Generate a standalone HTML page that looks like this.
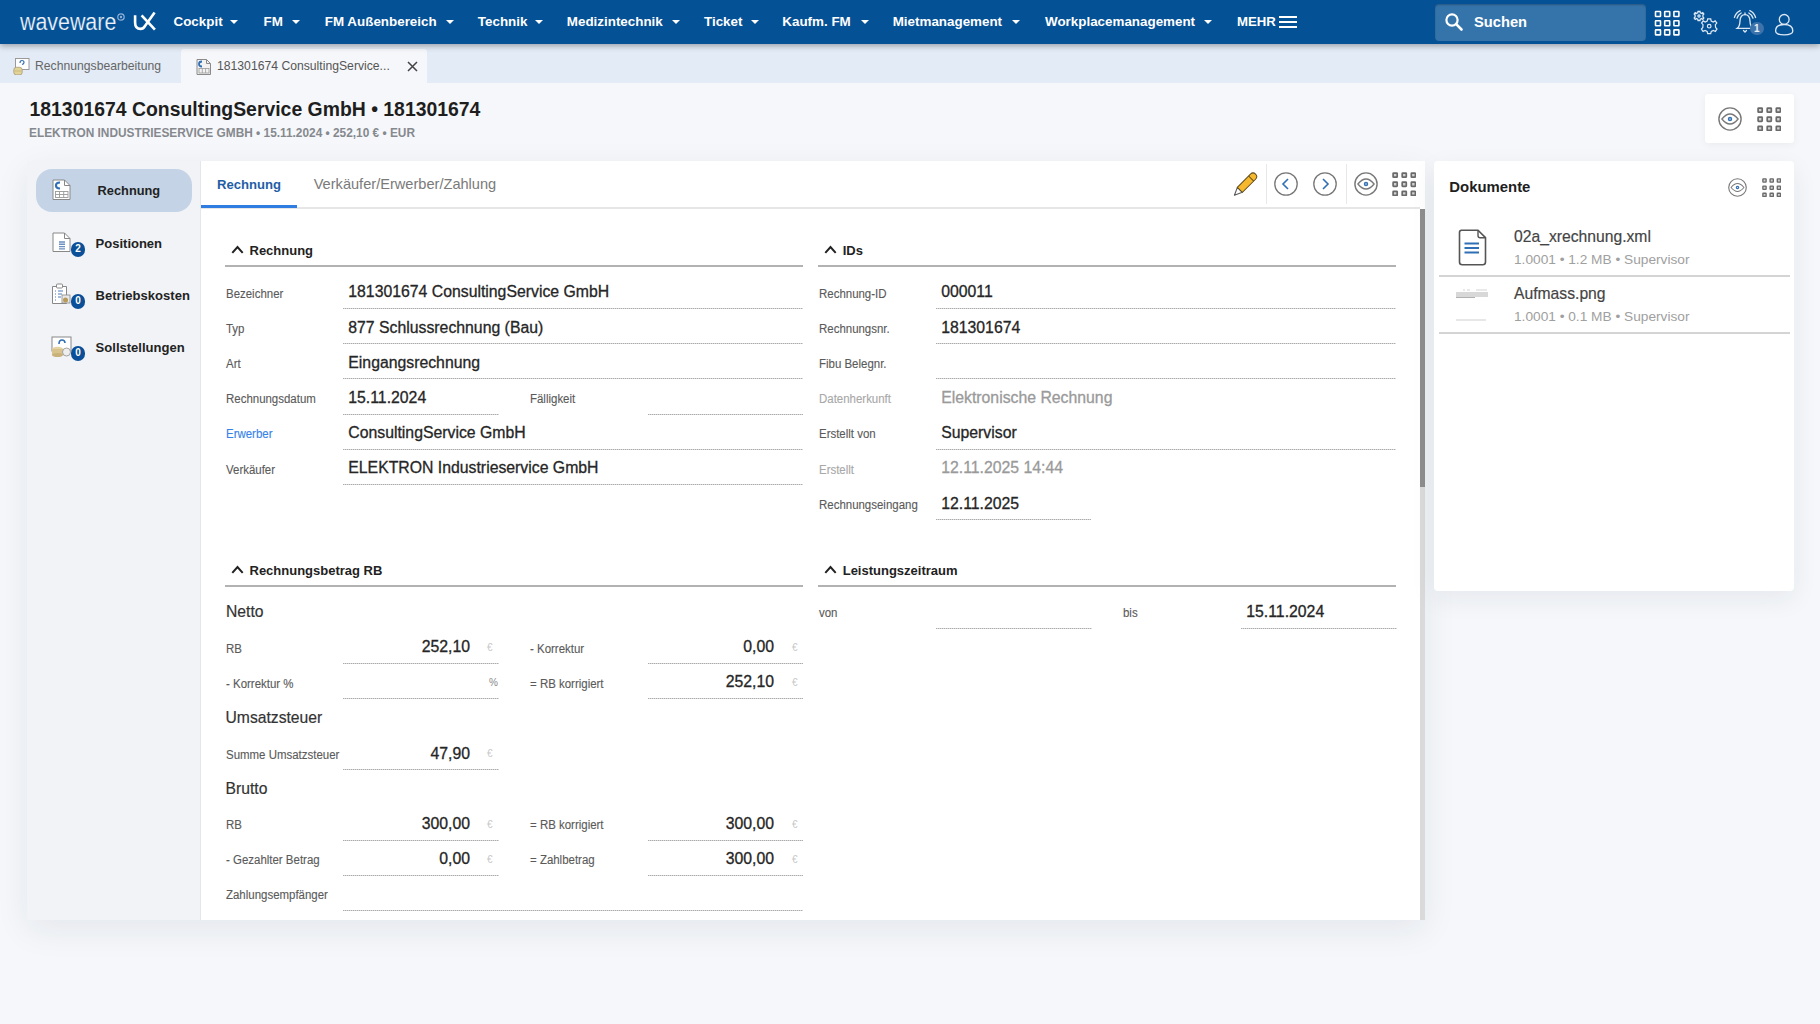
<!DOCTYPE html>
<html><head><meta charset="utf-8">
<style>
*{box-sizing:border-box;margin:0;padding:0}
html,body{width:1820px;height:1024px;overflow:hidden}
body{background:#f5f7fa;font-family:"Liberation Sans",sans-serif;position:relative}
.t{position:absolute;white-space:nowrap;line-height:1}
.v{-webkit-text-stroke:0.3px currentColor}
.l{-webkit-text-stroke:0.12px currentColor}
.m{-webkit-text-stroke:0.18px currentColor}
.r{position:absolute}
</style></head><body>
<div class="r" style="left:0px;top:0px;width:1820px;height:44px;background:#045196;box-shadow:0 2px 6px rgba(0,0,0,.32);z-index:2"></div>
<div class="r" style="left:0;top:0;width:1820px;height:43px;z-index:3">
<div class="t" style="left:19.5px;top:10.5px;font-size:23.5px;color:#eef3f9;transform:scaleX(.91);transform-origin:0 0;line-height:23.5px;-webkit-text-stroke:0.2px #045196">waveware</div>
<svg class="r" style="left:116px;top:12px" width="10" height="10" viewBox="0 0 10 10"><circle cx="5" cy="5" r="3.2" fill="none" stroke="#8fb0d6" stroke-width="1.2"/><circle cx="5" cy="5" r="1.2" fill="#8fb0d6"/></svg>
<svg class="r" style="left:130px;top:10px" width="28" height="22" viewBox="0 0 28 22"><path d="M5.1 5.3 V12.5 Q5.1 18.9 10.5 18.9 Q13.4 18.9 15 16 L24.6 2.6" fill="none" stroke="#fff" stroke-width="2.6"/><path d="M11.6 5.3 L24.9 19.6" fill="none" stroke="#fff" stroke-width="2.6"/></svg>
<div class="t " style="left:173.5px;top:15.06px;font-size:13.4px;color:#fff;font-weight:bold;">Cockpit</div>
<div class="r" style="left:230px;top:19.5px;width:0;height:0;border-left:4.6px solid transparent;border-right:4.6px solid transparent;border-top:4.8px solid #fff"></div>
<div class="t " style="left:263.5px;top:15.06px;font-size:13.4px;color:#fff;font-weight:bold;">FM</div>
<div class="r" style="left:292px;top:19.5px;width:0;height:0;border-left:4.6px solid transparent;border-right:4.6px solid transparent;border-top:4.8px solid #fff"></div>
<div class="t " style="left:324.8px;top:15.06px;font-size:13.4px;color:#fff;font-weight:bold;">FM Außenbereich</div>
<div class="r" style="left:446px;top:19.5px;width:0;height:0;border-left:4.6px solid transparent;border-right:4.6px solid transparent;border-top:4.8px solid #fff"></div>
<div class="t " style="left:477.8px;top:15.06px;font-size:13.4px;color:#fff;font-weight:bold;">Technik</div>
<div class="r" style="left:535px;top:19.5px;width:0;height:0;border-left:4.6px solid transparent;border-right:4.6px solid transparent;border-top:4.8px solid #fff"></div>
<div class="t " style="left:566.8px;top:15.06px;font-size:13.4px;color:#fff;font-weight:bold;">Medizintechnik</div>
<div class="r" style="left:672px;top:19.5px;width:0;height:0;border-left:4.6px solid transparent;border-right:4.6px solid transparent;border-top:4.8px solid #fff"></div>
<div class="t " style="left:704px;top:15.06px;font-size:13.4px;color:#fff;font-weight:bold;">Ticket</div>
<div class="r" style="left:751px;top:19.5px;width:0;height:0;border-left:4.6px solid transparent;border-right:4.6px solid transparent;border-top:4.8px solid #fff"></div>
<div class="t " style="left:782.3px;top:15.06px;font-size:13.4px;color:#fff;font-weight:bold;">Kaufm. FM</div>
<div class="r" style="left:861px;top:19.5px;width:0;height:0;border-left:4.6px solid transparent;border-right:4.6px solid transparent;border-top:4.8px solid #fff"></div>
<div class="t " style="left:892.7px;top:15.06px;font-size:13.4px;color:#fff;font-weight:bold;">Mietmanagement</div>
<div class="r" style="left:1012px;top:19.5px;width:0;height:0;border-left:4.6px solid transparent;border-right:4.6px solid transparent;border-top:4.8px solid #fff"></div>
<div class="t " style="left:1045px;top:15.06px;font-size:13.4px;color:#fff;font-weight:bold;">Workplacemanagement</div>
<div class="r" style="left:1204px;top:19.5px;width:0;height:0;border-left:4.6px solid transparent;border-right:4.6px solid transparent;border-top:4.8px solid #fff"></div>
<div class="t " style="left:1237px;top:15.23px;font-size:13.2px;color:#fff;font-weight:bold;">MEHR</div>
<div class="r" style="left:1279px;top:15.5px;width:18px;height:2px;background:#fff"></div>
<div class="r" style="left:1279px;top:20.5px;width:18px;height:2px;background:#fff"></div>
<div class="r" style="left:1279px;top:25.5px;width:18px;height:2px;background:#fff"></div>
<div class="r" style="left:1435px;top:3.5px;width:211px;height:37.5px;background:#3574ab;border-radius:4px;box-shadow:inset 0 1px 2px rgba(0,0,0,.25)"></div>
<svg class="r" style="left:1444px;top:12px" width="20" height="20" viewBox="0 0 20 20"><circle cx="8" cy="8" r="5.6" fill="none" stroke="#fff" stroke-width="2.2"/><path d="M12.2 12.2 L17.5 17.5" stroke="#fff" stroke-width="2.6" stroke-linecap="round"/></svg>
<div class="t " style="left:1474px;top:15.06px;font-size:14.7px;color:#fff;font-weight:bold;">Suchen</div>
<svg class="r" style="left:1654px;top:10px" width="26" height="26" viewBox="0 0 26 26"><rect x="1.5" y="1.5" width="5" height="5" rx="0.5" fill="none" stroke="#fff" stroke-width="1.6"/><rect x="10.7" y="1.5" width="5" height="5" rx="0.5" fill="none" stroke="#fff" stroke-width="1.6"/><rect x="19.9" y="1.5" width="5" height="5" rx="0.5" fill="none" stroke="#fff" stroke-width="1.6"/><rect x="1.5" y="10.7" width="5" height="5" rx="0.5" fill="none" stroke="#fff" stroke-width="1.6"/><rect x="10.7" y="10.7" width="5" height="5" rx="0.5" fill="none" stroke="#fff" stroke-width="1.6"/><rect x="19.9" y="10.7" width="5" height="5" rx="0.5" fill="none" stroke="#fff" stroke-width="1.6"/><rect x="1.5" y="19.9" width="5" height="5" rx="0.5" fill="none" stroke="#fff" stroke-width="1.6"/><rect x="10.7" y="19.9" width="5" height="5" rx="0.5" fill="none" stroke="#fff" stroke-width="1.6"/><rect x="19.9" y="19.9" width="5" height="5" rx="0.5" fill="none" stroke="#fff" stroke-width="1.6"/></svg>
<svg class="r" style="left:1693px;top:9px" width="28" height="28" viewBox="0 0 28 28" fill="none" stroke="#dde8f4" stroke-width="1.3">
<g transform="translate(16.2,17.2) scale(0.95)"><circle r="1.9" /><path d="M-1.6 -7.6 L1.6 -7.6 L2.1 -5.4 L4.2 -4.4 L6.3 -5.6 L8 -3.3 L6.5 -1.6 L6.7 1.4 L8.2 3.1 L6.5 5.5 L4.4 4.4 L2.2 5.5 L1.6 7.7 L-1.6 7.7 L-2.2 5.5 L-4.4 4.4 L-6.5 5.5 L-8.2 3.1 L-6.7 1.4 L-6.5 -1.6 L-8 -3.3 L-6.3 -5.6 L-4.2 -4.4 L-2.1 -5.4 Z"/></g>
<g transform="translate(6,7)"><circle r="1.1"/><path d="M-1 -4.5 L1 -4.5 L1.3 -3.2 L2.6 -2.6 L3.8 -3.3 L4.8 -2 L3.9 -0.9 L3.9 0.9 L4.8 2 L3.8 3.3 L2.6 2.6 L1.3 3.2 L1 4.5 L-1 4.5 L-1.3 3.2 L-2.6 2.6 L-3.8 3.3 L-4.8 2 L-3.9 0.9 L-3.9 -0.9 L-4.8 -2 L-3.8 -3.3 L-2.6 -2.6 L-1.3 -3.2 Z"/></g></svg>
<svg class="r" style="left:1732px;top:7px" width="28" height="28" viewBox="0 0 28 28" fill="none" stroke="#dde8f4" stroke-width="1.3" stroke-linecap="round">
<path d="M5.2 21.3 Q7.8 19.5 8 14 Q8.3 7.6 13 7.6 Q17.7 7.6 18 14 Q18.2 19.5 20.8 21.3 Z"/><path d="M13 6 V7.6"/><path d="M11.5 23.5 L13 25 L14.5 23.5"/>
<path d="M2.4 10.5 Q4 5.5 8.2 3.6"/><path d="M5 11.2 Q6.2 7.5 9.2 6"/><path d="M23.6 10.5 Q22 5.5 17.8 3.6"/><path d="M21 11.2 Q19.8 7.5 16.8 6"/></svg>
<div class="r" style="left:1750px;top:21.5px;width:13.6px;height:13.6px;border-radius:50%;background:#3d73ab;color:#e8eef6;font-size:10px;font-weight:bold;text-align:center;line-height:13.6px;font-family:'Liberation Sans'">1</div>
<svg class="r" style="left:1774px;top:10px" width="22" height="26" viewBox="0 0 22 26" fill="none" stroke="#dde8f4" stroke-width="1.3">
<circle cx="10.2" cy="9.4" r="4.9"/><path d="M1.6 21 Q1.6 14.5 10.2 14.5 Q18.8 14.5 18.8 21 Q18.8 24.8 10.2 24.8 Q1.6 24.8 1.6 21 Z"/></svg>
</div>
<div class="r" style="left:0px;top:43px;width:1820px;height:40px;background:#e2ebf6"></div>
<div class="r" style="left:181px;top:49px;width:246px;height:34px;background:#f5f7fa;border-radius:3px 3px 0 0"></div>
<svg class="r" style="left:13px;top:58px" width="17" height="17" viewBox="0 0 17 17">
<rect x="2.5" y="0.5" width="13.5" height="11" fill="#fff" stroke="#9a9a9a" stroke-width="1"/><path d="M7 5 Q7 2.5 9 2.5 Q11 2.5 11 4.5 Q11 6 9 6.5" fill="none" stroke="#3a6fb0" stroke-width="1.2"/>
<rect x="0.8" y="9.3" width="8.4" height="7.6" rx="2.6" fill="#e2d398" stroke="#a89a7a" stroke-width="0.8"/><path d="M1.5 13 H8.5" stroke="#c9b67a" stroke-width="0.8"/></svg>
<div class="t " style="left:35px;top:59.97px;font-size:12.2px;color:#666;">Rechnungsbearbeitung</div>
<svg class="r" style="left:196px;top:59px" width="16" height="16" viewBox="0 0 16 16">
<path d="M1 0.5 H10.5 L14.5 4.5 V15.5 H1 Z" fill="#f2f2f2" stroke="#8a8a8a" stroke-width="1"/><path d="M10.5 0.5 V4.5 H14.5" fill="none" stroke="#8a8a8a" stroke-width="1"/>
<path d="M6 2.5 Q3 2.5 3 5 Q3 7.5 6 7.5" fill="none" stroke="#2f6fb5" stroke-width="1.8"/><rect x="3" y="9.5" width="10" height="4.5" fill="none" stroke="#9a9a9a" stroke-width="0.8"/><path d="M6.3 9.5 V14 M9.6 9.5 V14" stroke="#9a9a9a" stroke-width="0.8"/></svg>
<div class="t " style="left:217px;top:60.07px;font-size:12.2px;color:#555;">181301674 ConsultingService...</div>
<svg class="r" style="left:407px;top:60.5px" width="11" height="11" viewBox="0 0 11 11"><path d="M1 1 L10 10 M10 1 L1 10" stroke="#444" stroke-width="1.5"/></svg>
<div class="t " style="left:29.5px;top:99.58px;font-size:19.4px;color:#1e1e1e;font-weight:bold;">181301674 ConsultingService GmbH • 181301674</div>
<div class="t " style="left:29px;top:128.16px;font-size:11.86px;color:#85898e;font-weight:bold;">ELEKTRON INDUSTRIESERVICE GMBH • 15.11.2024 • 252,10 € • EUR</div>
<div class="r" style="left:1705px;top:94px;width:89px;height:49px;background:#fff;border-radius:3px;box-shadow:0 2px 8px rgba(0,0,0,.05)"></div>
<svg class="r" style="left:1718px;top:106.5px" width="24" height="24" viewBox="0 0 24 24" fill="none">
<circle cx="12" cy="12" r="11.1" stroke="#787878" stroke-width="1.4"/><path d="M3.9 12 Q12 2 20.1 12 Q12 22 3.9 12 Z" stroke="#787878" stroke-width="1.3"/><circle cx="12" cy="12" r="1.5" fill="#d5e6f5" stroke="#3a74b0" stroke-width="1.5"/></svg>
<svg class="r" style="left:1757px;top:106.5px" width="24" height="24" viewBox="0 0 24 24" fill="#d2d2d2"><rect x="1.10" y="1.10" width="4.1" height="4.1" rx="0.5" stroke="#6a6a6a" stroke-width="1.7"/><rect x="10.20" y="1.10" width="4.1" height="4.1" rx="0.5" stroke="#6a6a6a" stroke-width="1.7"/><rect x="19.30" y="1.10" width="4.1" height="4.1" rx="0.5" stroke="#6a6a6a" stroke-width="1.7"/><rect x="1.10" y="10.20" width="4.1" height="4.1" rx="0.5" stroke="#6a6a6a" stroke-width="1.7"/><rect x="10.20" y="10.20" width="4.1" height="4.1" rx="0.5" stroke="#6a6a6a" stroke-width="1.7"/><rect x="19.30" y="10.20" width="4.1" height="4.1" rx="0.5" stroke="#6a6a6a" stroke-width="1.7"/><rect x="1.10" y="19.30" width="4.1" height="4.1" rx="0.5" stroke="#6a6a6a" stroke-width="1.7"/><rect x="10.20" y="19.30" width="4.1" height="4.1" rx="0.5" stroke="#6a6a6a" stroke-width="1.7"/><rect x="19.30" y="19.30" width="4.1" height="4.1" rx="0.5" stroke="#6a6a6a" stroke-width="1.7"/></svg>
<div class="r" style="left:27px;top:161px;width:1398px;height:759px;background:#fff;box-shadow:0 10px 32px rgba(30,40,70,.075)"></div>
<div class="r" style="left:27px;top:161px;width:174px;height:759px;background:#f1f3f7"></div>
<div class="r" style="left:201px;top:161px;width:1224px;height:759px;background:#fff"></div>
<div class="r" style="left:200px;top:161px;width:1px;height:759px;background:#e4e6ea"></div>
<div class="r" style="left:36px;top:168.7px;width:156px;height:43.4px;background:#c4d4e6;border-radius:16px"></div>
<div class="t " style="left:97.6px;top:184.86px;font-size:12.8px;color:#222;font-weight:bold;">Rechnung</div>
<div class="t " style="left:95.6px;top:236.50px;font-size:13px;color:#222;font-weight:bold;">Positionen</div>
<div class="t " style="left:95.6px;top:288.85px;font-size:13.05px;color:#222;font-weight:bold;">Betriebskosten</div>
<div class="t " style="left:95.6px;top:340.95px;font-size:13.05px;color:#222;font-weight:bold;">Sollstellungen</div>
<svg class="r" style="left:52px;top:179px" width="20" height="22" viewBox="0 0 20 22">
<path d="M1 1 H12.5 L18 6.5 V20.5 H1 Z" fill="#fff" stroke="#888" stroke-width="1"/><path d="M12.5 1 V6.5 H18" fill="none" stroke="#888" stroke-width="1"/>
<path d="M8 3.5 Q4 3.5 4 6.5 Q4 9.5 8 9.5" fill="none" stroke="#2f6fb5" stroke-width="2.2"/>
<rect x="3.5" y="12.5" width="12.5" height="6" fill="none" stroke="#999" stroke-width="0.9"/><path d="M7.5 12.5 V18.5 M11.7 12.5 V18.5 M3.5 15.5 H16" stroke="#999" stroke-width="0.9"/></svg>
<svg class="r" style="left:52px;top:231.5px" width="20" height="21" viewBox="0 0 20 21">
<path d="M1 1 H12.5 L18 6.5 V19.5 H1 Z" fill="#fff" stroke="#888" stroke-width="1"/><path d="M12.5 1 V6.5 H18" fill="none" stroke="#888" stroke-width="1"/>
<path d="M7 10 H13 M7 12.3 H13 M7 14.6 H13 M7 16.9 H13" stroke="#6a8fc0" stroke-width="1.4"/></svg>
<div class="r" style="left:70.7px;top:242px;width:14.6px;height:14.6px;border-radius:50%;background:#0a4f97;color:#fff;font-size:10px;font-weight:bold;text-align:center;line-height:14.6px;font-family:'Liberation Sans'">2</div>
<svg class="r" style="left:51px;top:283px" width="22" height="22" viewBox="0 0 22 22">
<path d="M1.5 3.5 H15.5 V20.5 H1.5 Z" fill="#fff" stroke="#888" stroke-width="1"/><rect x="5.5" y="1" width="6" height="4" rx="1" fill="#fff" stroke="#888" stroke-width="1"/>
<path d="M4 8 H5 M7 8 H12 M4 11 H5 M7 11 H11 M4 14 H5 M7 14 H10 M4 17 H5" stroke="#4a7cc0" stroke-width="1.2"/>
<rect x="11" y="12" width="8" height="8" fill="#e9e9e9" stroke="#888" stroke-width="0.8"/><circle cx="14.5" cy="17" r="2.5" fill="#b89a5a"/></svg>
<div class="r" style="left:70.7px;top:294px;width:14.6px;height:14.6px;border-radius:50%;background:#0a4f97;color:#fff;font-size:10px;font-weight:bold;text-align:center;line-height:14.6px;font-family:'Liberation Sans'">0</div>
<svg class="r" style="left:51px;top:335.5px" width="22" height="22" viewBox="0 0 22 22">
<rect x="1" y="1" width="19" height="14" fill="#fff" stroke="#888" stroke-width="1"/><path d="M8 8 Q8 4 11 4 Q14 4 14 7" fill="none" stroke="#2f6fb5" stroke-width="1.6"/>
<ellipse cx="6.5" cy="13" rx="5.5" ry="2.2" fill="#e6d3a2"/><rect x="1" y="13" width="11" height="6" fill="#d9c38d"/><ellipse cx="6.5" cy="19" rx="5.5" ry="2" fill="#c9b27a"/><circle cx="15.5" cy="16" r="4" fill="#eee" stroke="#999" stroke-width="0.9"/></svg>
<div class="r" style="left:70.7px;top:346px;width:14.6px;height:14.6px;border-radius:50%;background:#0a4f97;color:#fff;font-size:10px;font-weight:bold;text-align:center;line-height:14.6px;font-family:'Liberation Sans'">0</div>
<div class="t " style="left:217px;top:178.21px;font-size:13.1px;color:#1f5ea6;font-weight:bold;">Rechnung</div>
<div class="t " style="left:313.7px;top:176.94px;font-size:14.6px;color:#7a7a7a;">Verkäufer/Erwerber/Zahlung</div>
<div class="r" style="left:201px;top:207px;width:1219px;height:1.5px;background:#e6e6e6"></div>
<div class="r" style="left:201px;top:205px;width:96px;height:3px;background:#2f7de1"></div>
<svg class="r" style="left:1228px;top:166px" width="36" height="36" viewBox="0 0 36 36"><g transform="translate(6.2,29.5) rotate(-45)">
<path d="M0.3 0 L8 -3.5 L8 3.5 Z" fill="#fff" stroke="#5a5a5a" stroke-width="1.1" stroke-linejoin="round"/>
<path d="M8 -3.6 H26.6 Q30.2 -3.6 30.2 0 Q30.2 3.6 26.6 3.6 H8 Z" fill="#f6b82c" stroke="#5e4c22" stroke-width="1"/>
<path d="M24 -3.6 V3.6" stroke="#5e4c22" stroke-width="1"/></g></svg>
<div class="r" style="left:1266px;top:164px;width:1px;height:40px;background:#e8e8e8"></div>
<div class="r" style="left:1345.5px;top:164px;width:1px;height:40px;background:#e8e8e8"></div>
<svg class="r" style="left:1274px;top:172px" width="24" height="24" viewBox="0 0 24 24" fill="none">
<circle cx="12" cy="12" r="11.2" stroke="#777" stroke-width="1.3"/><path d="M14 7 L9 12 L14 17" stroke="#2f6fb5" stroke-width="1.6"/></svg>
<svg class="r" style="left:1313.3px;top:172px" width="24" height="24" viewBox="0 0 24 24" fill="none">
<circle cx="12" cy="12" r="11.2" stroke="#777" stroke-width="1.3"/><path d="M10 7 L15 12 L10 17" stroke="#2f6fb5" stroke-width="1.6"/></svg>
<svg class="r" style="left:1353.6px;top:172px" width="24" height="24" viewBox="0 0 24 24" fill="none">
<circle cx="12" cy="12" r="11.1" stroke="#787878" stroke-width="1.4"/><path d="M3.9 12 Q12 2 20.1 12 Q12 22 3.9 12 Z" stroke="#787878" stroke-width="1.3"/><circle cx="12" cy="12" r="1.5" fill="#d5e6f5" stroke="#3a74b0" stroke-width="1.5"/></svg>
<svg class="r" style="left:1392.4px;top:171.6px" width="24" height="24" viewBox="0 0 24 24" fill="#d2d2d2"><rect x="1.10" y="1.10" width="4.1" height="4.1" rx="0.5" stroke="#6a6a6a" stroke-width="1.7"/><rect x="10.20" y="1.10" width="4.1" height="4.1" rx="0.5" stroke="#6a6a6a" stroke-width="1.7"/><rect x="19.30" y="1.10" width="4.1" height="4.1" rx="0.5" stroke="#6a6a6a" stroke-width="1.7"/><rect x="1.10" y="10.20" width="4.1" height="4.1" rx="0.5" stroke="#6a6a6a" stroke-width="1.7"/><rect x="10.20" y="10.20" width="4.1" height="4.1" rx="0.5" stroke="#6a6a6a" stroke-width="1.7"/><rect x="19.30" y="10.20" width="4.1" height="4.1" rx="0.5" stroke="#6a6a6a" stroke-width="1.7"/><rect x="1.10" y="19.30" width="4.1" height="4.1" rx="0.5" stroke="#6a6a6a" stroke-width="1.7"/><rect x="10.20" y="19.30" width="4.1" height="4.1" rx="0.5" stroke="#6a6a6a" stroke-width="1.7"/><rect x="19.30" y="19.30" width="4.1" height="4.1" rx="0.5" stroke="#6a6a6a" stroke-width="1.7"/></svg>
<div class="r" style="left:1420px;top:208.5px;width:4.5px;height:711px;background:#dadada"></div>
<div class="r" style="left:1420px;top:208.5px;width:4.5px;height:278px;background:#8e8e8e"></div>
<svg class="r" style="left:231px;top:245px" width="13" height="9" viewBox="0 0 13 9"><path d="M1.3 7.8 L6.5 2 L11.7 7.8" fill="none" stroke="#222" stroke-width="2"/></svg>
<div class="t " style="left:249.5px;top:244.00px;font-size:13px;color:#222;font-weight:bold;">Rechnung</div>
<div class="r" style="left:225px;top:265.3px;width:577.6px;height:2px;background:#b2b2b2"></div>
<div class="t l" style="left:225.5px;top:287.54px;font-size:12px;color:#5a5a5a;transform:scaleX(.955);transform-origin:0 0;">Bezeichner</div>
<div class="t v" style="left:348.3px;top:284.43px;font-size:15.8px;color:#262626;">181301674 ConsultingService GmbH</div>
<div class="r" style="left:342.7px;top:308px;width:459.90000000000003px;height:1px;background-image:linear-gradient(to right,#ababab 50%,#d8d8d8 50%);background-size:2px 1px;"></div>
<div class="t l" style="left:225.5px;top:322.74px;font-size:12px;color:#5a5a5a;transform:scaleX(.955);transform-origin:0 0;">Typ</div>
<div class="t v" style="left:348.3px;top:319.63px;font-size:15.8px;color:#262626;">877 Schlussrechnung (Bau)</div>
<div class="r" style="left:342.7px;top:343.2px;width:459.90000000000003px;height:1px;background-image:linear-gradient(to right,#ababab 50%,#d8d8d8 50%);background-size:2px 1px;"></div>
<div class="t l" style="left:225.5px;top:357.94px;font-size:12px;color:#5a5a5a;transform:scaleX(.955);transform-origin:0 0;">Art</div>
<div class="t v" style="left:348.3px;top:354.83px;font-size:15.8px;color:#262626;">Eingangsrechnung</div>
<div class="r" style="left:342.7px;top:378.4px;width:459.90000000000003px;height:1px;background-image:linear-gradient(to right,#ababab 50%,#d8d8d8 50%);background-size:2px 1px;"></div>
<div class="t l" style="left:225.5px;top:393.14px;font-size:12px;color:#5a5a5a;transform:scaleX(.955);transform-origin:0 0;">Rechnungsdatum</div>
<div class="t v" style="left:348.3px;top:390.03px;font-size:15.8px;color:#262626;">15.11.2024</div>
<div class="r" style="left:342.7px;top:413.6px;width:156.3px;height:1px;background-image:linear-gradient(to right,#ababab 50%,#d8d8d8 50%);background-size:2px 1px;"></div>
<div class="t l" style="left:529.5px;top:393.14px;font-size:12px;color:#5a5a5a;transform:scaleX(.955);transform-origin:0 0;">Fälligkeit</div>
<div class="r" style="left:647.5px;top:413.6px;width:155.10000000000002px;height:1px;background-image:linear-gradient(to right,#ababab 50%,#d8d8d8 50%);background-size:2px 1px;"></div>
<div class="t l" style="left:225.5px;top:428.34px;font-size:12px;color:#3482ea;transform:scaleX(.955);transform-origin:0 0;">Erwerber</div>
<div class="t v" style="left:348.3px;top:425.23px;font-size:15.8px;color:#262626;">ConsultingService GmbH</div>
<div class="r" style="left:342.7px;top:448.8px;width:459.90000000000003px;height:1px;background-image:linear-gradient(to right,#ababab 50%,#d8d8d8 50%);background-size:2px 1px;"></div>
<div class="t l" style="left:225.5px;top:463.54px;font-size:12px;color:#5a5a5a;transform:scaleX(.955);transform-origin:0 0;">Verkäufer</div>
<div class="t v" style="left:348.3px;top:460.43px;font-size:15.8px;color:#262626;">ELEKTRON Industrieservice GmbH</div>
<div class="r" style="left:342.7px;top:484px;width:459.90000000000003px;height:1px;background-image:linear-gradient(to right,#ababab 50%,#d8d8d8 50%);background-size:2px 1px;"></div>
<svg class="r" style="left:824.2px;top:245px" width="13" height="9" viewBox="0 0 13 9"><path d="M1.3 7.8 L6.5 2 L11.7 7.8" fill="none" stroke="#222" stroke-width="2"/></svg>
<div class="t " style="left:842.7px;top:244.00px;font-size:13px;color:#222;font-weight:bold;">IDs</div>
<div class="r" style="left:818.2px;top:265.3px;width:577.8px;height:2px;background:#b2b2b2"></div>
<div class="t l" style="left:818.6px;top:287.54px;font-size:12px;color:#5a5a5a;transform:scaleX(.955);transform-origin:0 0;">Rechnung-ID</div>
<div class="t v" style="left:941.2px;top:284.43px;font-size:15.8px;color:#262626;">000011</div>
<div class="r" style="left:935.8px;top:308px;width:460.20000000000005px;height:1px;background-image:linear-gradient(to right,#ababab 50%,#d8d8d8 50%);background-size:2px 1px;"></div>
<div class="t l" style="left:818.6px;top:322.74px;font-size:12px;color:#5a5a5a;transform:scaleX(.955);transform-origin:0 0;">Rechnungsnr.</div>
<div class="t v" style="left:941.2px;top:319.63px;font-size:15.8px;color:#262626;">181301674</div>
<div class="r" style="left:935.8px;top:343.2px;width:460.20000000000005px;height:1px;background-image:linear-gradient(to right,#ababab 50%,#d8d8d8 50%);background-size:2px 1px;"></div>
<div class="t l" style="left:818.6px;top:357.94px;font-size:12px;color:#5a5a5a;transform:scaleX(.955);transform-origin:0 0;">Fibu Belegnr.</div>
<div class="r" style="left:935.8px;top:378.4px;width:460.20000000000005px;height:1px;background-image:linear-gradient(to right,#ababab 50%,#d8d8d8 50%);background-size:2px 1px;"></div>
<div class="t l" style="left:818.6px;top:393.14px;font-size:12px;color:#a8a8a8;transform:scaleX(.955);transform-origin:0 0;">Datenherkunft</div>
<div class="t v" style="left:941.2px;top:390.03px;font-size:15.8px;color:#9a9a9a;">Elektronische Rechnung</div>
<div class="t l" style="left:818.6px;top:428.34px;font-size:12px;color:#5a5a5a;transform:scaleX(.955);transform-origin:0 0;">Erstellt von</div>
<div class="t v" style="left:941.2px;top:425.23px;font-size:15.8px;color:#262626;">Supervisor</div>
<div class="r" style="left:935.8px;top:448.8px;width:460.20000000000005px;height:1px;background-image:linear-gradient(to right,#ababab 50%,#d8d8d8 50%);background-size:2px 1px;"></div>
<div class="t l" style="left:818.6px;top:463.54px;font-size:12px;color:#a8a8a8;transform:scaleX(.955);transform-origin:0 0;">Erstellt</div>
<div class="t v" style="left:941.2px;top:460.43px;font-size:15.8px;color:#9a9a9a;">12.11.2025 14:44</div>
<div class="t l" style="left:818.6px;top:498.74px;font-size:12px;color:#5a5a5a;transform:scaleX(.955);transform-origin:0 0;">Rechnungseingang</div>
<div class="t v" style="left:941.2px;top:495.63px;font-size:15.8px;color:#262626;">12.11.2025</div>
<div class="r" style="left:935.8px;top:519.2px;width:155.70000000000005px;height:1px;background-image:linear-gradient(to right,#ababab 50%,#d8d8d8 50%);background-size:2px 1px;"></div>
<svg class="r" style="left:231px;top:564.8px" width="13" height="9" viewBox="0 0 13 9"><path d="M1.3 7.8 L6.5 2 L11.7 7.8" fill="none" stroke="#222" stroke-width="2"/></svg>
<div class="t " style="left:249.5px;top:563.80px;font-size:13px;color:#222;font-weight:bold;">Rechnungsbetrag RB</div>
<div class="r" style="left:225px;top:585.0999999999999px;width:577.6px;height:2px;background:#b2b2b2"></div>
<div class="t m" style="left:226px;top:604.31px;font-size:15.7px;color:#333;">Netto</div>
<div class="t l" style="left:225.5px;top:642.54px;font-size:12px;color:#5a5a5a;transform:scaleX(.955);transform-origin:0 0;">RB</div>
<div class="t v" style="right:1350px;top:639.43px;font-size:15.8px;color:#262626;">252,10</div>
<div class="t " style="left:487px;top:643.03px;font-size:10px;color:#c8c8c8;">€</div>
<div class="r" style="left:342.7px;top:663px;width:156.60000000000002px;height:1px;background-image:linear-gradient(to right,#ababab 50%,#d8d8d8 50%);background-size:2px 1px;"></div>
<div class="t l" style="left:529.8px;top:642.54px;font-size:12px;color:#5a5a5a;transform:scaleX(.955);transform-origin:0 0;">- Korrektur</div>
<div class="t v" style="right:1046px;top:639.43px;font-size:15.8px;color:#262626;">0,00</div>
<div class="t " style="left:792px;top:643.03px;font-size:10px;color:#c8c8c8;">€</div>
<div class="r" style="left:647.7px;top:663px;width:154.89999999999998px;height:1px;background-image:linear-gradient(to right,#ababab 50%,#d8d8d8 50%);background-size:2px 1px;"></div>
<div class="t l" style="left:225.5px;top:677.54px;font-size:12px;color:#5a5a5a;transform:scaleX(.955);transform-origin:0 0;">- Korrektur %</div>
<div class="t " style="left:489px;top:678.03px;font-size:10px;color:#888;">%</div>
<div class="r" style="left:342.7px;top:698px;width:156.60000000000002px;height:1px;background-image:linear-gradient(to right,#ababab 50%,#d8d8d8 50%);background-size:2px 1px;"></div>
<div class="t l" style="left:529.8px;top:677.54px;font-size:12px;color:#5a5a5a;transform:scaleX(.955);transform-origin:0 0;">= RB korrigiert</div>
<div class="t v" style="right:1046px;top:674.43px;font-size:15.8px;color:#262626;">252,10</div>
<div class="t " style="left:792px;top:678.03px;font-size:10px;color:#c8c8c8;">€</div>
<div class="r" style="left:647.7px;top:698px;width:154.89999999999998px;height:1px;background-image:linear-gradient(to right,#ababab 50%,#d8d8d8 50%);background-size:2px 1px;"></div>
<div class="t m" style="left:225.5px;top:710.21px;font-size:15.7px;color:#333;">Umsatzsteuer</div>
<div class="t l" style="left:225.5px;top:748.74px;font-size:12px;color:#5a5a5a;transform:scaleX(.955);transform-origin:0 0;">Summe Umsatzsteuer</div>
<div class="t v" style="right:1350px;top:745.63px;font-size:15.8px;color:#262626;">47,90</div>
<div class="t " style="left:487px;top:749.24px;font-size:10px;color:#c8c8c8;">€</div>
<div class="r" style="left:342.7px;top:769.2px;width:156.60000000000002px;height:1px;background-image:linear-gradient(to right,#ababab 50%,#d8d8d8 50%);background-size:2px 1px;"></div>
<div class="t m" style="left:225.5px;top:780.71px;font-size:15.7px;color:#333;">Brutto</div>
<div class="t l" style="left:225.5px;top:819.14px;font-size:12px;color:#5a5a5a;transform:scaleX(.955);transform-origin:0 0;">RB</div>
<div class="t v" style="right:1350px;top:816.03px;font-size:15.8px;color:#262626;">300,00</div>
<div class="t " style="left:487px;top:819.63px;font-size:10px;color:#c8c8c8;">€</div>
<div class="r" style="left:342.7px;top:839.6px;width:156.60000000000002px;height:1px;background-image:linear-gradient(to right,#ababab 50%,#d8d8d8 50%);background-size:2px 1px;"></div>
<div class="t l" style="left:529.8px;top:819.14px;font-size:12px;color:#5a5a5a;transform:scaleX(.955);transform-origin:0 0;">= RB korrigiert</div>
<div class="t v" style="right:1046px;top:816.03px;font-size:15.8px;color:#262626;">300,00</div>
<div class="t " style="left:792px;top:819.63px;font-size:10px;color:#c8c8c8;">€</div>
<div class="r" style="left:647.7px;top:839.6px;width:154.89999999999998px;height:1px;background-image:linear-gradient(to right,#ababab 50%,#d8d8d8 50%);background-size:2px 1px;"></div>
<div class="t l" style="left:225.5px;top:854.24px;font-size:12px;color:#5a5a5a;transform:scaleX(.955);transform-origin:0 0;">- Gezahlter Betrag</div>
<div class="t v" style="right:1350px;top:851.13px;font-size:15.8px;color:#262626;">0,00</div>
<div class="t " style="left:487px;top:854.74px;font-size:10px;color:#c8c8c8;">€</div>
<div class="r" style="left:342.7px;top:874.7px;width:156.60000000000002px;height:1px;background-image:linear-gradient(to right,#ababab 50%,#d8d8d8 50%);background-size:2px 1px;"></div>
<div class="t l" style="left:529.8px;top:854.24px;font-size:12px;color:#5a5a5a;transform:scaleX(.955);transform-origin:0 0;">= Zahlbetrag</div>
<div class="t v" style="right:1046px;top:851.13px;font-size:15.8px;color:#262626;">300,00</div>
<div class="t " style="left:792px;top:854.74px;font-size:10px;color:#c8c8c8;">€</div>
<div class="r" style="left:647.7px;top:874.7px;width:154.89999999999998px;height:1px;background-image:linear-gradient(to right,#ababab 50%,#d8d8d8 50%);background-size:2px 1px;"></div>
<div class="t l" style="left:225.5px;top:889.44px;font-size:12px;color:#5a5a5a;transform:scaleX(.955);transform-origin:0 0;">Zahlungsempfänger</div>
<div class="r" style="left:342.5px;top:910px;width:460.1px;height:1px;background-image:linear-gradient(to right,#ababab 50%,#d8d8d8 50%);background-size:2px 1px;"></div>
<svg class="r" style="left:824.2px;top:564.8px" width="13" height="9" viewBox="0 0 13 9"><path d="M1.3 7.8 L6.5 2 L11.7 7.8" fill="none" stroke="#222" stroke-width="2"/></svg>
<div class="t " style="left:842.7px;top:563.80px;font-size:13px;color:#222;font-weight:bold;">Leistungszeitraum</div>
<div class="r" style="left:818.2px;top:585.0999999999999px;width:577.8px;height:2px;background:#b2b2b2"></div>
<div class="t l" style="left:818.6px;top:607.34px;font-size:12px;color:#5a5a5a;transform:scaleX(.955);transform-origin:0 0;">von</div>
<div class="r" style="left:935.6px;top:627.5px;width:156.30000000000007px;height:1px;background-image:linear-gradient(to right,#ababab 50%,#d8d8d8 50%);background-size:2px 1px;"></div>
<div class="t l" style="left:1123px;top:607.34px;font-size:12px;color:#5a5a5a;transform:scaleX(.955);transform-origin:0 0;">bis</div>
<div class="t v" style="left:1246.3px;top:603.73px;font-size:15.8px;color:#262626;">15.11.2024</div>
<div class="r" style="left:1241px;top:627.5px;width:155.79999999999995px;height:1px;background-image:linear-gradient(to right,#ababab 50%,#d8d8d8 50%);background-size:2px 1px;"></div>
<div class="r" style="left:1434px;top:161px;width:360px;height:429.5px;background:#fff;border-radius:4px;box-shadow:0 8px 26px rgba(30,40,70,.07)"></div>
<div class="t " style="left:1449.3px;top:180.19px;font-size:14.9px;color:#1e1e1e;font-weight:bold;">Dokumente</div>
<svg class="r" style="left:1728px;top:178px" width="19" height="19" viewBox="0 0 24 24" fill="none">
<circle cx="12" cy="12" r="11.1" stroke="#787878" stroke-width="1.4"/><path d="M3.9 12 Q12 2 20.1 12 Q12 22 3.9 12 Z" stroke="#787878" stroke-width="1.3"/><circle cx="12" cy="12" r="1.5" fill="#d5e6f5" stroke="#3a74b0" stroke-width="1.5"/></svg>
<svg class="r" style="left:1761.8px;top:177.7px" width="19" height="19" viewBox="0 0 24 24" fill="#d2d2d2"><rect x="1.10" y="1.10" width="4.1" height="4.1" rx="0.5" stroke="#6a6a6a" stroke-width="1.7"/><rect x="10.20" y="1.10" width="4.1" height="4.1" rx="0.5" stroke="#6a6a6a" stroke-width="1.7"/><rect x="19.30" y="1.10" width="4.1" height="4.1" rx="0.5" stroke="#6a6a6a" stroke-width="1.7"/><rect x="1.10" y="10.20" width="4.1" height="4.1" rx="0.5" stroke="#6a6a6a" stroke-width="1.7"/><rect x="10.20" y="10.20" width="4.1" height="4.1" rx="0.5" stroke="#6a6a6a" stroke-width="1.7"/><rect x="19.30" y="10.20" width="4.1" height="4.1" rx="0.5" stroke="#6a6a6a" stroke-width="1.7"/><rect x="1.10" y="19.30" width="4.1" height="4.1" rx="0.5" stroke="#6a6a6a" stroke-width="1.7"/><rect x="10.20" y="19.30" width="4.1" height="4.1" rx="0.5" stroke="#6a6a6a" stroke-width="1.7"/><rect x="19.30" y="19.30" width="4.1" height="4.1" rx="0.5" stroke="#6a6a6a" stroke-width="1.7"/></svg>
<svg class="r" style="left:1457.5px;top:229px" width="29" height="37" viewBox="0 0 29 37" fill="none">
<path d="M3.5 1.2 H20 L27.5 8.7 V33 Q27.5 35.8 24.7 35.8 H4.3 Q1.5 35.8 1.5 33 V3.5 Q1.5 1.2 3.5 1.2 Z" stroke="#555" stroke-width="1.6"/><path d="M20 1.2 V6.5 Q20 8.7 22.2 8.7 H27.5" stroke="#555" stroke-width="1.4"/>
<path d="M6.5 14.5 H21 M6.5 19 H21 M6.5 23.5 H21" stroke="#2f6fb5" stroke-width="1.8"/></svg>
<div class="t m" style="left:1514px;top:229.31px;font-size:15.7px;color:#444;">02a_xrechnung.xml</div>
<div class="t " style="left:1514px;top:252.70px;font-size:13.7px;color:#a0a0a0;">1.0001 • 1.2 MB • Supervisor</div>
<div class="r" style="left:1439px;top:275px;width:351px;height:2px;background:#d4d4d4"></div>
<svg class="r" style="left:1455px;top:286px" width="34" height="36" viewBox="0 0 34 36">
<path d="M1 8 H6 M8 4 H10 M12 4 H15 M21 4 H32" stroke="#c8c8c8" stroke-width="0.8"/><rect x="1" y="6" width="32" height="5" fill="#d8d8d8"/><path d="M1 11.5 H20" stroke="#b0b0b0" stroke-width="1"/><path d="M1 34 H31" stroke="#cfcfcf" stroke-width="1"/></svg>
<div class="t m" style="left:1514px;top:286.41px;font-size:15.7px;color:#444;">Aufmass.png</div>
<div class="t " style="left:1514px;top:309.80px;font-size:13.7px;color:#a0a0a0;">1.0001 • 0.1 MB • Supervisor</div>
<div class="r" style="left:1439px;top:332px;width:351px;height:2px;background:#d4d4d4"></div>
</body></html>
